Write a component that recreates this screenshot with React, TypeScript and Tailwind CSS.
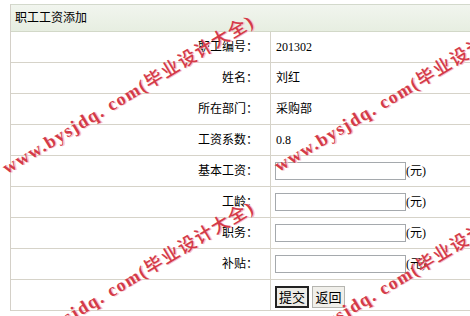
import React from 'react';

const rows = [
  { label: '职工编号：', value: '201302' },
  { label: '姓名：', value: '刘红' },
  { label: '所在部门：', value: '采购部' },
  { label: '工资系数：', value: '0.8' },
];

const inputRows = ['基本工资：', '工龄：', '职务：', '补贴：'];

// watermark tiles: [left, top]
const marks = [
  [4, 160],
  [276, 158],
  [4, 346],
  [276, 344],
];

export default function App() {
  return (
    <div
      className="relative w-[470px] h-[316px] overflow-hidden bg-white pl-[10px] pt-[4px] text-[12px] text-black"
      style={{ fontFamily: '"Liberation Serif", "Noto Sans CJK SC", serif' }}
    >
      <div className="w-[480px] border-l border-t border-l-[#d4d0c8] border-t-[#d3d9cc]">
        {/* Header */}
        <div className="h-[27px] flex items-center pl-[4px] bg-gradient-to-b from-[#f1f5ee] to-[#e7eee1] border-b border-[#d2d8c8]">
          职工工资添加
        </div>

        {rows.map((r) => (
          <div key={r.label} className="grid grid-cols-[260px_1fr] h-[31px] border-b border-[#d6d3c9]">
            <div className="flex items-center justify-end pr-[12px] border-r border-[#d6d3c9]">{r.label}</div>
            <div className="flex items-center pl-[5px]">{r.value}</div>
          </div>
        ))}

        {inputRows.map((label) => (
          <div key={label} className="grid grid-cols-[260px_1fr] h-[31px] border-b border-[#d6d3c9]">
            <div className="flex items-center justify-end pr-[12px] border-r border-[#d6d3c9]">{label}</div>
            <div className="flex items-center pl-[4px]">
              <input
                type="text"
                className="w-[131px] h-[18px] border border-[#a5a9ad] bg-white outline-none"
              />
              <span>(元)</span>
            </div>
          </div>
        ))}

        <div className="grid grid-cols-[260px_1fr] h-[31px] border-b border-[#d6d3c9]">
          <div className="border-r border-[#d6d3c9]" />
          <div className="flex items-center gap-[3px] pl-[4px] pt-[4px]">
            <button className="w-[34px] h-[22px] border-2 border-[#222] bg-[#ecebe6] text-[13px] leading-none">
              提交
            </button>
            <button className="w-[33px] h-[22px] border border-[#b5b5b0] bg-[#f0efea] text-[13px] leading-none">
              返回
            </button>
          </div>
        </div>
      </div>

      {/* Watermark overlay */}
      {marks.map(([l, t], i) => (
        <span
          key={i}
          className="absolute whitespace-nowrap text-[18px] tracking-[1.5px] leading-none text-[#d43a48] origin-left -rotate-[31deg] pointer-events-none [text-shadow:1px_1px_0_#f7c4c8]"
          style={{ left: l, top: t }}
        >
          <span className="font-bold">www.bysjdq. com(</span>
          <span className="font-medium">毕业设计大全</span>
          <span className="font-bold">)</span>
        </span>
      ))}
    </div>
  );
}
